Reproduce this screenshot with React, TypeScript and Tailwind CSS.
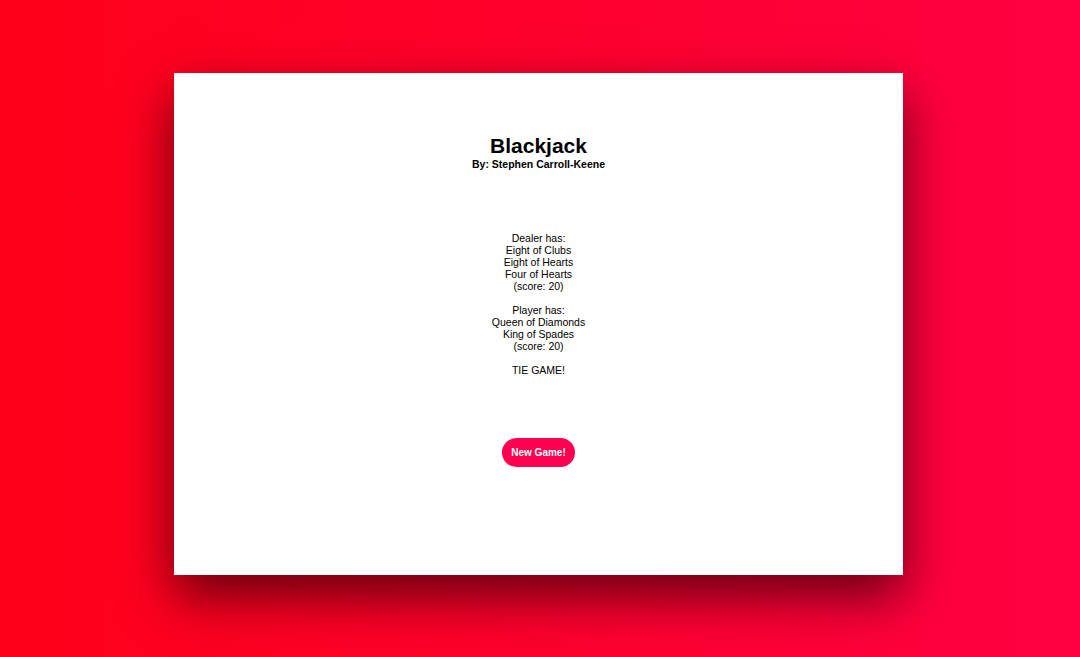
import React from "react";

export default function App() {
  const f = { fontFamily: '"Liberation Sans", Arial, sans-serif' };
  return (
    <div
      className="relative w-[1080px] h-[657px] overflow-hidden bg-[linear-gradient(to_right,#ff0019,#ff0042)] pt-[73px] pl-[174px]"
      style={f}
    >
      <div className="absolute left-[72px] top-[192px] w-[3px] h-[3px] rounded-full bg-[#d8101e]" />
      <div className="w-[729px] h-[502px] bg-white shadow-[0_22px_48px_rgba(40,0,5,0.7)] flex flex-col items-center pt-[61px] text-black">
        <h1 className="text-[21px] leading-[24px] font-bold">Blackjack</h1>
        <p className="text-[10.5px] leading-[12px] font-bold">By: Stephen Carroll-Keene</p>
        <div className="mt-[62px] text-[10.5px] leading-[12px] text-center">
          <div>Dealer has:</div>
          <div>Eight of Clubs</div>
          <div>Eight of Hearts</div>
          <div>Four of Hearts</div>
          <div>(score: 20)</div>
          <div className="h-[12px]" />
          <div>Player has:</div>
          <div>Queen of Diamonds</div>
          <div>King of Spades</div>
          <div>(score: 20)</div>
          <div className="h-[12px]" />
          <div>TIE GAME!</div>
        </div>
        <button className="mt-[62px] w-[73px] h-[29px] rounded-full bg-[#ff0050] text-white text-[10px] font-bold flex items-center justify-center">
          New Game!
        </button>
      </div>
    </div>
  );
}
